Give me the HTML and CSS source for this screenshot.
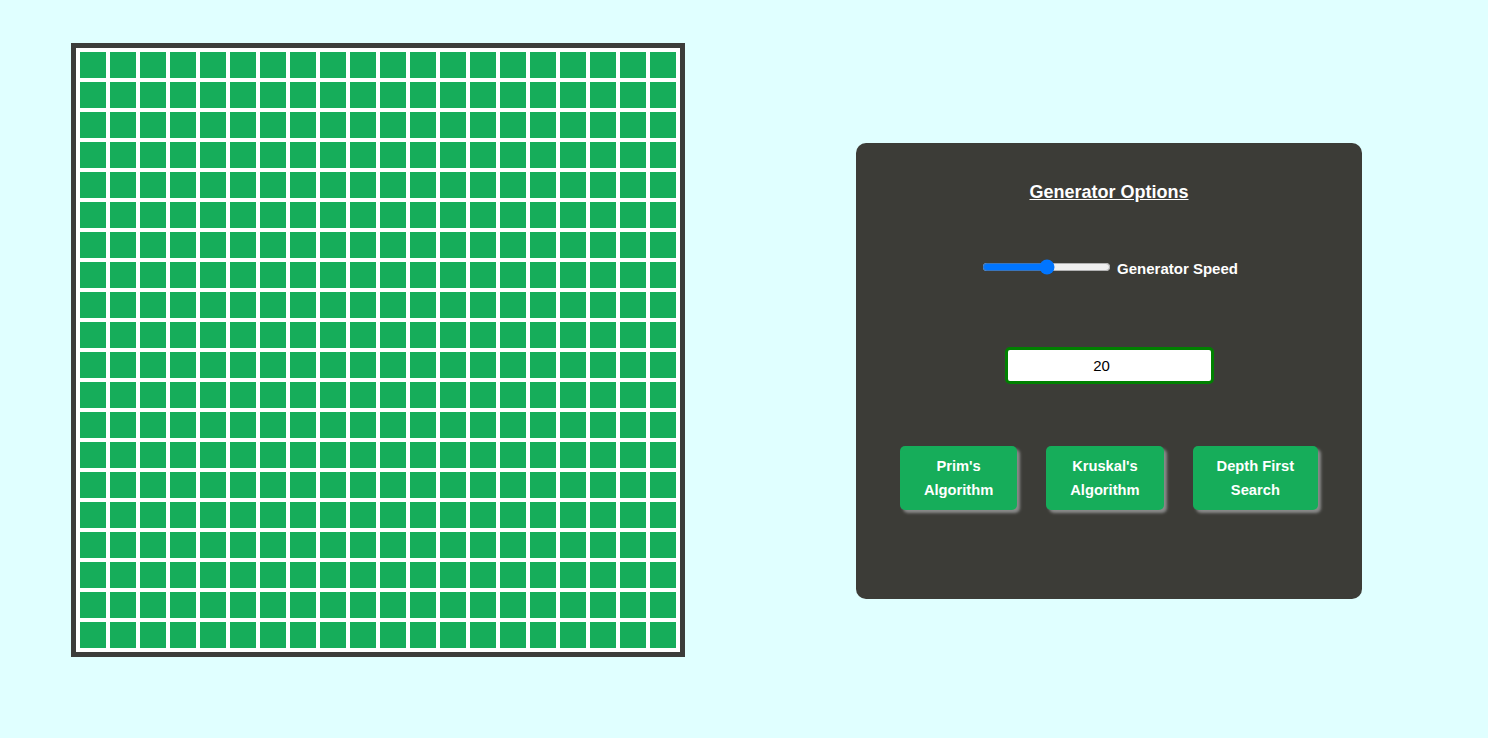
FILE: index.html
```html
<!DOCTYPE html>
<html>
<head>
<meta charset="utf-8">
<link rel="stylesheet" href="styles.css">
</head>
<body>
<div class="page">
  <div class="maze">
    <div class="cell"></div><div class="cell"></div><div class="cell"></div><div class="cell"></div><div class="cell"></div><div class="cell"></div><div class="cell"></div><div class="cell"></div><div class="cell"></div><div class="cell"></div><div class="cell"></div><div class="cell"></div><div class="cell"></div><div class="cell"></div><div class="cell"></div><div class="cell"></div><div class="cell"></div><div class="cell"></div><div class="cell"></div><div class="cell"></div>
    <div class="cell"></div><div class="cell"></div><div class="cell"></div><div class="cell"></div><div class="cell"></div><div class="cell"></div><div class="cell"></div><div class="cell"></div><div class="cell"></div><div class="cell"></div><div class="cell"></div><div class="cell"></div><div class="cell"></div><div class="cell"></div><div class="cell"></div><div class="cell"></div><div class="cell"></div><div class="cell"></div><div class="cell"></div><div class="cell"></div>
    <div class="cell"></div><div class="cell"></div><div class="cell"></div><div class="cell"></div><div class="cell"></div><div class="cell"></div><div class="cell"></div><div class="cell"></div><div class="cell"></div><div class="cell"></div><div class="cell"></div><div class="cell"></div><div class="cell"></div><div class="cell"></div><div class="cell"></div><div class="cell"></div><div class="cell"></div><div class="cell"></div><div class="cell"></div><div class="cell"></div>
    <div class="cell"></div><div class="cell"></div><div class="cell"></div><div class="cell"></div><div class="cell"></div><div class="cell"></div><div class="cell"></div><div class="cell"></div><div class="cell"></div><div class="cell"></div><div class="cell"></div><div class="cell"></div><div class="cell"></div><div class="cell"></div><div class="cell"></div><div class="cell"></div><div class="cell"></div><div class="cell"></div><div class="cell"></div><div class="cell"></div>
    <div class="cell"></div><div class="cell"></div><div class="cell"></div><div class="cell"></div><div class="cell"></div><div class="cell"></div><div class="cell"></div><div class="cell"></div><div class="cell"></div><div class="cell"></div><div class="cell"></div><div class="cell"></div><div class="cell"></div><div class="cell"></div><div class="cell"></div><div class="cell"></div><div class="cell"></div><div class="cell"></div><div class="cell"></div><div class="cell"></div>
    <div class="cell"></div><div class="cell"></div><div class="cell"></div><div class="cell"></div><div class="cell"></div><div class="cell"></div><div class="cell"></div><div class="cell"></div><div class="cell"></div><div class="cell"></div><div class="cell"></div><div class="cell"></div><div class="cell"></div><div class="cell"></div><div class="cell"></div><div class="cell"></div><div class="cell"></div><div class="cell"></div><div class="cell"></div><div class="cell"></div>
    <div class="cell"></div><div class="cell"></div><div class="cell"></div><div class="cell"></div><div class="cell"></div><div class="cell"></div><div class="cell"></div><div class="cell"></div><div class="cell"></div><div class="cell"></div><div class="cell"></div><div class="cell"></div><div class="cell"></div><div class="cell"></div><div class="cell"></div><div class="cell"></div><div class="cell"></div><div class="cell"></div><div class="cell"></div><div class="cell"></div>
    <div class="cell"></div><div class="cell"></div><div class="cell"></div><div class="cell"></div><div class="cell"></div><div class="cell"></div><div class="cell"></div><div class="cell"></div><div class="cell"></div><div class="cell"></div><div class="cell"></div><div class="cell"></div><div class="cell"></div><div class="cell"></div><div class="cell"></div><div class="cell"></div><div class="cell"></div><div class="cell"></div><div class="cell"></div><div class="cell"></div>
    <div class="cell"></div><div class="cell"></div><div class="cell"></div><div class="cell"></div><div class="cell"></div><div class="cell"></div><div class="cell"></div><div class="cell"></div><div class="cell"></div><div class="cell"></div><div class="cell"></div><div class="cell"></div><div class="cell"></div><div class="cell"></div><div class="cell"></div><div class="cell"></div><div class="cell"></div><div class="cell"></div><div class="cell"></div><div class="cell"></div>
    <div class="cell"></div><div class="cell"></div><div class="cell"></div><div class="cell"></div><div class="cell"></div><div class="cell"></div><div class="cell"></div><div class="cell"></div><div class="cell"></div><div class="cell"></div><div class="cell"></div><div class="cell"></div><div class="cell"></div><div class="cell"></div><div class="cell"></div><div class="cell"></div><div class="cell"></div><div class="cell"></div><div class="cell"></div><div class="cell"></div>
    <div class="cell"></div><div class="cell"></div><div class="cell"></div><div class="cell"></div><div class="cell"></div><div class="cell"></div><div class="cell"></div><div class="cell"></div><div class="cell"></div><div class="cell"></div><div class="cell"></div><div class="cell"></div><div class="cell"></div><div class="cell"></div><div class="cell"></div><div class="cell"></div><div class="cell"></div><div class="cell"></div><div class="cell"></div><div class="cell"></div>
    <div class="cell"></div><div class="cell"></div><div class="cell"></div><div class="cell"></div><div class="cell"></div><div class="cell"></div><div class="cell"></div><div class="cell"></div><div class="cell"></div><div class="cell"></div><div class="cell"></div><div class="cell"></div><div class="cell"></div><div class="cell"></div><div class="cell"></div><div class="cell"></div><div class="cell"></div><div class="cell"></div><div class="cell"></div><div class="cell"></div>
    <div class="cell"></div><div class="cell"></div><div class="cell"></div><div class="cell"></div><div class="cell"></div><div class="cell"></div><div class="cell"></div><div class="cell"></div><div class="cell"></div><div class="cell"></div><div class="cell"></div><div class="cell"></div><div class="cell"></div><div class="cell"></div><div class="cell"></div><div class="cell"></div><div class="cell"></div><div class="cell"></div><div class="cell"></div><div class="cell"></div>
    <div class="cell"></div><div class="cell"></div><div class="cell"></div><div class="cell"></div><div class="cell"></div><div class="cell"></div><div class="cell"></div><div class="cell"></div><div class="cell"></div><div class="cell"></div><div class="cell"></div><div class="cell"></div><div class="cell"></div><div class="cell"></div><div class="cell"></div><div class="cell"></div><div class="cell"></div><div class="cell"></div><div class="cell"></div><div class="cell"></div>
    <div class="cell"></div><div class="cell"></div><div class="cell"></div><div class="cell"></div><div class="cell"></div><div class="cell"></div><div class="cell"></div><div class="cell"></div><div class="cell"></div><div class="cell"></div><div class="cell"></div><div class="cell"></div><div class="cell"></div><div class="cell"></div><div class="cell"></div><div class="cell"></div><div class="cell"></div><div class="cell"></div><div class="cell"></div><div class="cell"></div>
    <div class="cell"></div><div class="cell"></div><div class="cell"></div><div class="cell"></div><div class="cell"></div><div class="cell"></div><div class="cell"></div><div class="cell"></div><div class="cell"></div><div class="cell"></div><div class="cell"></div><div class="cell"></div><div class="cell"></div><div class="cell"></div><div class="cell"></div><div class="cell"></div><div class="cell"></div><div class="cell"></div><div class="cell"></div><div class="cell"></div>
    <div class="cell"></div><div class="cell"></div><div class="cell"></div><div class="cell"></div><div class="cell"></div><div class="cell"></div><div class="cell"></div><div class="cell"></div><div class="cell"></div><div class="cell"></div><div class="cell"></div><div class="cell"></div><div class="cell"></div><div class="cell"></div><div class="cell"></div><div class="cell"></div><div class="cell"></div><div class="cell"></div><div class="cell"></div><div class="cell"></div>
    <div class="cell"></div><div class="cell"></div><div class="cell"></div><div class="cell"></div><div class="cell"></div><div class="cell"></div><div class="cell"></div><div class="cell"></div><div class="cell"></div><div class="cell"></div><div class="cell"></div><div class="cell"></div><div class="cell"></div><div class="cell"></div><div class="cell"></div><div class="cell"></div><div class="cell"></div><div class="cell"></div><div class="cell"></div><div class="cell"></div>
    <div class="cell"></div><div class="cell"></div><div class="cell"></div><div class="cell"></div><div class="cell"></div><div class="cell"></div><div class="cell"></div><div class="cell"></div><div class="cell"></div><div class="cell"></div><div class="cell"></div><div class="cell"></div><div class="cell"></div><div class="cell"></div><div class="cell"></div><div class="cell"></div><div class="cell"></div><div class="cell"></div><div class="cell"></div><div class="cell"></div>
    <div class="cell"></div><div class="cell"></div><div class="cell"></div><div class="cell"></div><div class="cell"></div><div class="cell"></div><div class="cell"></div><div class="cell"></div><div class="cell"></div><div class="cell"></div><div class="cell"></div><div class="cell"></div><div class="cell"></div><div class="cell"></div><div class="cell"></div><div class="cell"></div><div class="cell"></div><div class="cell"></div><div class="cell"></div><div class="cell"></div>
  </div>
  <div class="panel">
    <h2 class="title">Generator Options</h2>
    <div class="speed-row">
      <input class="slider" type="range" min="0" max="100" value="50">
      <label class="speed-label">Generator Speed</label>
    </div>
    <input class="size-input" type="number" value="20">
    <div class="buttons">
      <button class="algo-btn">Prim's<br>Algorithm</button>
      <button class="algo-btn">Kruskal's<br>Algorithm</button>
      <button class="algo-btn">Depth First<br>Search</button>
    </div>
  </div>
</div>
</body>
</html>
```
FILE: styles.css
```css
html, body {
  margin: 0;
  padding: 0;
  background: #e0ffff;
  font-family: "Liberation Sans", Arial, sans-serif;
}

.page {
  display: flex;
  align-items: flex-start;
  padding: 43px 0 0 71px;
  gap: 171px;
}

.maze {
  display: grid;
  grid-template-columns: repeat(20, 26px);
  grid-auto-rows: 26px;
  gap: 4px;
  padding: 4px;
  background: #ffffff;
  border: 5px solid #3c3c3a;
}

.cell {
  background: #16ad5a;
}

.panel {
  margin-top: 100px;
  width: 506px;
  height: 456px;
  box-sizing: border-box;
  background: #3c3c37;
  border-radius: 10px;
  padding-top: 39px;
  display: flex;
  flex-direction: column;
  align-items: center;
  color: #ffffff;
}

.title {
  margin: 0;
  font-size: 18px;
  line-height: 21px;
  font-weight: bold;
  text-decoration: underline;
}

.speed-row {
  margin-top: 54px;
  display: flex;
  align-items: center;
  gap: 6px;
  height: 20px;
}

.slider {
  width: 129px;
  margin: 0 0 0 2px;
}

.speed-label {
  font-size: 15px;
  font-weight: bold;
  margin-top: 2px;
}

.size-input {
  margin-top: 70px;
  width: 209px;
  height: 37px;
  box-sizing: border-box;
  border: 3px solid #008000;
  border-radius: 5px;
  background: #ffffff;
  text-align: center;
  font-family: "Liberation Sans", Arial, sans-serif;
  font-size: 15px;
  color: #000000;
  outline: none;
}

.buttons {
  margin-top: 62px;
  display: flex;
  gap: 29px;
}

.algo-btn {
  background: #16ad5a;
  color: #ffffff;
  border: none;
  border-radius: 5px;
  font-family: "Liberation Sans", Arial, sans-serif;
  font-size: 14.7px;
  font-weight: bold;
  line-height: 24px;
  padding: 8px 24px;
  box-shadow: 3px 3px 3px #8a8a8a;
}
```
